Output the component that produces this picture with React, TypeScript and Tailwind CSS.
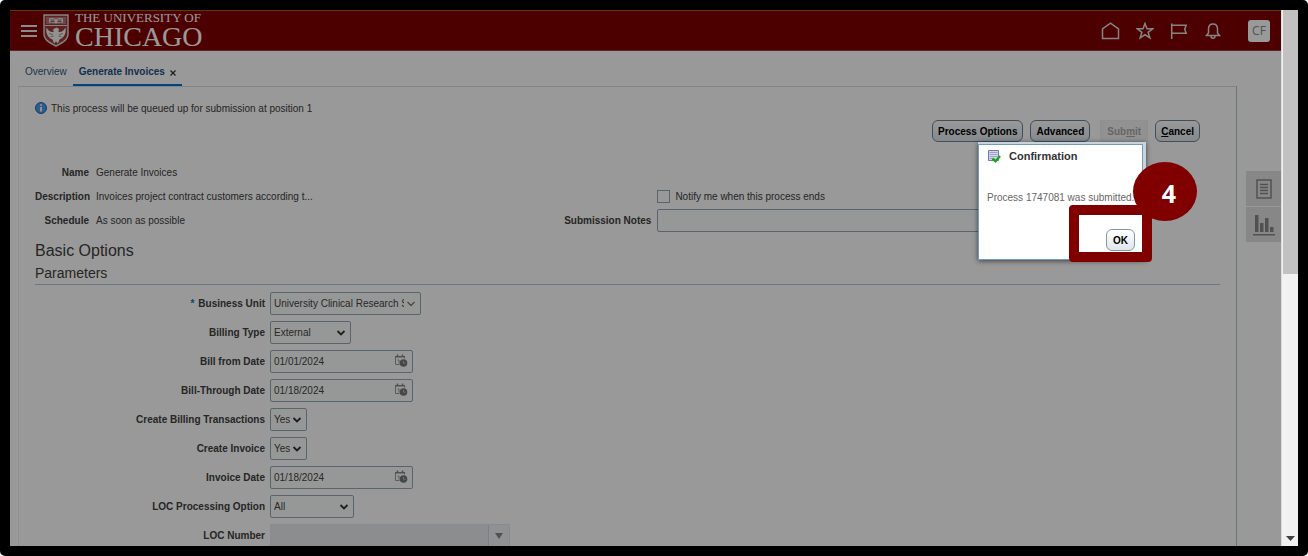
import React, { useState } from 'react';

const labelClass = 'text-right text-[10px] font-bold text-[#404040]';
const boxClass = 'h-[23px] appearance-none rounded-[2px] border border-[#95a8b6] bg-[#fbfdfd] text-[10px] text-[#444]';
const pillClass = 'h-[22px] rounded-md border border-[#6d8499] bg-gradient-to-b from-[#ffffff] to-[#dfe6ec] px-[5px] text-[10px] font-bold text-black';

function Shield() {
  return (
    <svg width="26" height="33" viewBox="0 0 26 33" fill="none">
      <path d="M1 1h24v19c0 6-6 9-12 12C7 29 1 26 1 20z" fill="#9d3a3a" stroke="#ddd" strokeWidth="1.400" />
      <path d="M3 3h20v7H3z" fill="#b77070" />
      <path d="M6 4.500c3-1 5-.5 7 .7 2-1.200 4-1.700 7-.7v4.500c-3-.8-5-.5-7 .6-2-1.100-4-1.400-7-.6z" fill="#e6e6e6" />
      <path d="M7.500 6h4M7.500 7.500h4M14.500 6h4M14.500 7.500h4" stroke="#800000" strokeWidth=".6" />
      <path d="M2 11.500h22" stroke="#ddd" />
      <path d="M3.500 13.500c-1 6 1.500 10 6 12l1.500 4 2-2 2 2 1.500-4c4.500-2 7-6 6-12-2 3.500-4 5-7 4.500l.5-3-2.500-1.500-3 1.500-.5 1.500 1 1.500c-3.500.5-5.500-1-7.500-4.500z" fill="#f2f2f2" />
      <path d="M6 19.500l4 1M7.500 22.500l3-.5M20 19.500l-4 1M18.500 22.500l-3-.5" stroke="#a04040" strokeWidth=".6" />
    </svg>
  );
}

function Chevron({ thin }: { thin?: boolean }) {
  return (
    <svg className="pointer-events-none absolute top-2 right-[5px]" width="10" height="8" viewBox="0 0 10 8" fill="none">
      <path d="M1.500 2l3.500 3.500L8.500 2" stroke={thin ? '#777' : '#333'} strokeWidth={thin ? 1.3 : 1.8} />
    </svg>
  );
}

function CalendarClock() {
  return (
    <svg width="14" height="14" viewBox="0 0 14 14" fill="none">
      <path d="M5.500 10.500H1.500V2.500h9v2" stroke="#999" />
      <path d="M1 2h10v1.500H1z" fill="#888" />
      <path d="M3.500.5v2M8.500.5v2" stroke="#888" strokeWidth="1.500" />
      <path d="M3.500 6H5v3.500" stroke="#999" />
      <circle cx="9.500" cy="9" r="3.800" fill="#777" />
      <path d="M9.500 7v2.200h2" stroke="#ccc" strokeWidth=".8" />
    </svg>
  );
}

function Row({ id, label, required, children }: { id: string; label: string; required?: boolean; children: React.ReactNode }) {
  return (
    <div className="flex h-[23px] items-center gap-[5px]">
      <label htmlFor={id} className={labelClass + ' w-[230px]'}>
        {required && <span className="mr-1 align-top text-[#0572ce]">*</span>}
        {label}
      </label>
      {children}
    </div>
  );
}

function Select({ id, value, width, thin }: { id: string; value: string; width: string; thin?: boolean }) {
  return (
    <div className={'relative flex ' + width}>
      <select id={id} className={boxClass + ' w-full pr-4 pl-[3px]'}>
        <option>{value}</option>
      </select>
      <Chevron thin={thin} />
    </div>
  );
}

function DateField({ id, initial }: { id: string; initial: string }) {
  const [value, setValue] = useState(initial);
  return (
    <div className="relative flex w-[143px]">
      <input id={id} className={boxClass + ' w-full pr-6 pl-[3px]'} value={value} onChange={(e) => setValue(e.target.value)} />
      <button className="absolute top-1 right-[5px]" aria-label="Select date">
        <CalendarClock />
      </button>
    </div>
  );
}

function Header() {
  return (
    <header className="flex h-[41px] shrink-0 items-center border-t border-b border-t-[#a85a00] border-b-[#a04040] bg-[#800000] px-[11px] text-white">
      <button aria-label="Menu">
        <svg width="16" height="13" viewBox="0 0 16 13" stroke="#e6e6e6" strokeWidth="2">
          <path d="M0 2h16M0 7h16M0 12h16" />
        </svg>
      </button>
      <a href="#" className="ml-[6px] flex items-center gap-[6px] font-['Liberation_Serif',serif]">
        <Shield />
        <span className="flex flex-col">
          <span className="text-[13px] leading-[13px]">THE UNIVERSITY OF</span>
          <span className="text-[28px] leading-[26px]">CHICAGO</span>
        </span>
      </a>
      <div className="ml-auto flex items-center gap-4">
        <button aria-label="Home">
          <svg width="19" height="18" viewBox="0 0 19 18" fill="none" stroke="#ddd" strokeWidth="1.500">
            <path d="M1.500 16.500V7L9.500 1.200 17.500 7v9.500z" />
          </svg>
        </button>
        <button aria-label="Favorites">
          <svg width="18" height="18" viewBox="0 0 18 18" fill="none" stroke="#ddd" strokeWidth="1.500">
            <path d="M9 1.500l2 5.300h5.600l-4.500 3.500 1.700 5.600L9 12.600l-4.800 3.300 1.700-5.600L1.400 6.800H7z" />
          </svg>
        </button>
        <button aria-label="Watchlist">
          <svg width="18" height="18" viewBox="0 0 18 18" fill="none" stroke="#ddd" strokeWidth="1.500">
            <path d="M1.700 1.500v15.500M1.700 3.200h14.500l-1.500 4 1.500 4H1.700" />
          </svg>
        </button>
        <button aria-label="Notifications">
          <svg width="18" height="18" viewBox="0 0 18 18" fill="none" stroke="#ddd" strokeWidth="1.500">
            <path d="M2.500 13.500l2-2.500V7c0-3.500 2-5 4.500-5s4.500 1.500 4.500 5v4l2 2.500zM7 14c0 3 4 3 4 0" />
          </svg>
        </button>
        <button className="ml-[10px] size-[22px] rounded-[3px] bg-white font-['Open_Sans',sans-serif] text-xs text-[#888]">CF</button>
      </div>
    </header>
  );
}

function Confirmation() {
  return (
    <div role="dialog" aria-labelledby="confirm-title" className="absolute top-[132px] right-[135px] h-[118px] w-[168px] bg-[#c9d3db] pt-[2px] pr-[3px] shadow-[0_1px_5px_rgba(0,0,0,0.6)]">
      <div className="h-full border border-[#6d9cc0] bg-white px-2 pt-[3px]">
        <div className="flex h-4 items-center gap-2">
          <svg width="14" height="14" viewBox="0 0 14 14">
            <path d="M1.500 1.500h10v10h-10z" fill="#d6d8ef" stroke="#7478a8" />
            <path d="M2.500 3.500h8M2.500 5.500h8M2.500 7.500h8M2.500 9.500h4" stroke="#9da1c8" />
            <path d="M5.500 9.500l3 2.700L13 7" fill="none" stroke="#1ca41c" strokeWidth="2.500" />
          </svg>
          <h2 id="confirm-title" className="text-[11px] font-bold text-[#333]">Confirmation</h2>
        </div>
        <p className="mt-[26px] text-[10px] leading-4 whitespace-nowrap text-[#666]">Process 1747081 was submitted.</p>
      </div>
      {/* step marker around the OK button */}
      <div className="absolute top-[63px] left-[91px] flex h-[57px] w-[83px] items-end justify-end rounded border-[10px] border-[#800000] bg-white pr-[7px] pb-px">
        <button className="h-[22px] w-[29px] rounded-md border border-[#8497a6] bg-gradient-to-b from-white to-[#dfe6ec] text-[10px] font-bold text-black">OK</button>
      </div>
      <span className="absolute top-5 left-[155px] flex h-[59px] w-16 items-center justify-center rounded-[50%] bg-[#800000] pt-1 pl-2 font-['Open_Sans',sans-serif] text-[25px] font-bold text-white">4</span>
    </div>
  );
}

function ScrollBar() {
  return (
    <div className="flex w-[17px] shrink-0 flex-col items-center justify-between border-l border-[#dcdcdc] bg-[#f1f1f1]">
      <div className="h-[264px] w-[15px] bg-[#c1c1c1]" />
      <svg className="mb-[5px]" width="9" height="5" viewBox="0 0 9 5">
        <path d="M0 0h9L4.500 5z" fill="#404040" />
      </svg>
    </div>
  );
}

export default function App() {
  const [notify, setNotify] = useState(false);
  const [notes, setNotes] = useState('');

  return (
    <div className="flex h-screen overflow-hidden rounded-[5px] border-[10px] border-black bg-white font-['Liberation_Sans',Arial,sans-serif] text-[10px] text-[#404040]">
      <div className="relative flex min-w-0 flex-1 flex-col overflow-hidden">
        <Header />
        <nav className="flex h-[35px] shrink-0 items-end pl-[15px]">
          <a href="#" className="flex h-7 items-center border-b-2 border-transparent text-[#33587e]">Overview</a>
          <div className="ml-[6px] flex h-7 items-center gap-[5px] border-b-2 border-[#0572ce] px-[6px]">
            <a href="#" className="font-bold text-[#1d4f86]">Generate Invoices</a>
            <button aria-label="Close tab">
              <svg className="mt-1" width="6" height="6" viewBox="0 0 6 6" stroke="#333" strokeWidth="1.200">
                <path d="M.5.5l5 5M5.500.5l-5 5" />
              </svg>
            </button>
          </div>
        </nav>
        <div className="flex flex-1">
          <main className="ml-2 min-w-0 flex-1 border border-b-0 border-[#d3dfe8] border-r-[#b4c2cd] border-l-[#eceff1] px-4 pt-[13px]">
            <div className="flex h-4 items-center gap-1">
              <svg width="12" height="12" viewBox="0 0 12 12">
                <circle cx="6" cy="6" r="5.500" fill="#4a9be8" stroke="#2765a8" />
                <path d="M6 2.200v1.600M6 5v4.500" stroke="#fff" strokeWidth="1.800" />
              </svg>
              <span>This process will be queued up for submission at position 1</span>
            </div>
            <div className="mt-1 flex justify-end pr-5">
              <button className={pillClass}>Process Options</button>
              <button className={pillClass + ' ml-[7px]'}>Advanced</button>
              <button disabled className="ml-[10px] h-[22px] border border-[#eef1f3] bg-[#f3f4f5] px-[6px] text-[10px] font-bold text-[#a9a9a9]">
                Sub<u>m</u>it
              </button>
              <button className={pillClass + ' ml-[7px]'}>
                <u>C</u>ancel
              </button>
            </div>
            <div className="mt-[18px] grid grid-cols-[44%_1fr]">
              <dl className="grid auto-rows-[24px] grid-cols-[54px_1fr] items-center gap-x-[7px]">
                <dt className={labelClass}>Name</dt>
                <dd>Generate Invoices</dd>
                <dt className={labelClass}>Description</dt>
                <dd>Invoices project contract customers according t...</dd>
                <dt className={labelClass}>Schedule</dt>
                <dd>As soon as possible</dd>
              </dl>
              <div className="grid auto-rows-[24px] grid-cols-[95px_1fr] items-center gap-x-[6px] pt-6">
                <label className="col-start-2 flex items-center gap-[5px]">
                  <input type="checkbox" className="size-[13px] appearance-none border border-[#95a8b6] bg-white" checked={notify} onChange={(e) => setNotify(e.target.checked)} />
                  Notify me when this process ends
                </label>
                <label htmlFor="notes" className={labelClass}>Submission Notes</label>
                <input id="notes" className={boxClass + ' w-[400px] px-1'} value={notes} onChange={(e) => setNotes(e.target.value)} />
              </div>
            </div>
            <h1 className="mt-[7px] text-base leading-6">Basic Options</h1>
            <h2 className="border-b border-[#b4c6d6] text-sm leading-[21px]">Parameters</h2>
            <form className="mt-[7px] flex flex-col gap-[6px]" onSubmit={(e) => e.preventDefault()}>
              <Row id="unit" label="Business Unit" required>
                <Select id="unit" value="University Clinical Research S" width="w-[151px]" thin />
              </Row>
              <Row id="type" label="Billing Type">
                <Select id="type" value="External" width="w-[81px]" />
              </Row>
              <Row id="from" label="Bill from Date">
                <DateField id="from" initial="01/01/2024" />
              </Row>
              <Row id="through" label="Bill-Through Date">
                <DateField id="through" initial="01/18/2024" />
              </Row>
              <Row id="transactions" label="Create Billing Transactions">
                <Select id="transactions" value="Yes" width="w-[37px]" />
              </Row>
              <Row id="invoice" label="Create Invoice">
                <Select id="invoice" value="Yes" width="w-[37px]" />
              </Row>
              <Row id="invoice-date" label="Invoice Date">
                <DateField id="invoice-date" initial="01/18/2024" />
              </Row>
              <Row id="loc-option" label="LOC Processing Option">
                <Select id="loc-option" value="All" width="w-[84px]" />
              </Row>
              <Row id="loc-number" label="LOC Number">
                <div className="flex w-[240px] border border-[#e3e8ee] bg-[#eaebee]">
                  <input id="loc-number" disabled className="h-[21px] min-w-0 flex-1" />
                  <button disabled aria-label="Open list" className="flex w-[21px] items-center justify-center border-l border-[#ccd6df] bg-[#f1f2f3]">
                    <svg width="8" height="6" viewBox="0 0 8 6">
                      <path d="M0 0h8L4 6z" fill="#888" />
                    </svg>
                  </button>
                </div>
              </Row>
            </form>
          </main>
          <aside className="ml-[9px] flex w-[35px] flex-col gap-px pt-[85px]">
            <button aria-label="Report" className="flex h-[35px] items-center justify-center bg-[#e2e2e2]">
              <svg width="16" height="20" viewBox="0 0 16 20" fill="none" stroke="#888" strokeWidth="1.500">
                <path d="M1 1h14v18H1zM4 5.500h8M4 8.500h8M4 11.500h8M4 14.500h8" />
              </svg>
            </button>
            <button aria-label="Analytics" className="flex h-[35px] items-center justify-center bg-[#e2e2e2]">
              <svg width="22" height="22" viewBox="0 0 22 22" fill="#888">
                <path d="M2 1h3.500v17H2zM7 9h3.500v9H7zM12 4h3.500v14H12zM17 13h3.500v5H17zM0 20h22v1.500H0z" />
              </svg>
            </button>
          </aside>
        </div>
        <div className="absolute inset-0 bg-black/40" />
        <Confirmation />
      </div>
      <ScrollBar />
    </div>
  );
}
